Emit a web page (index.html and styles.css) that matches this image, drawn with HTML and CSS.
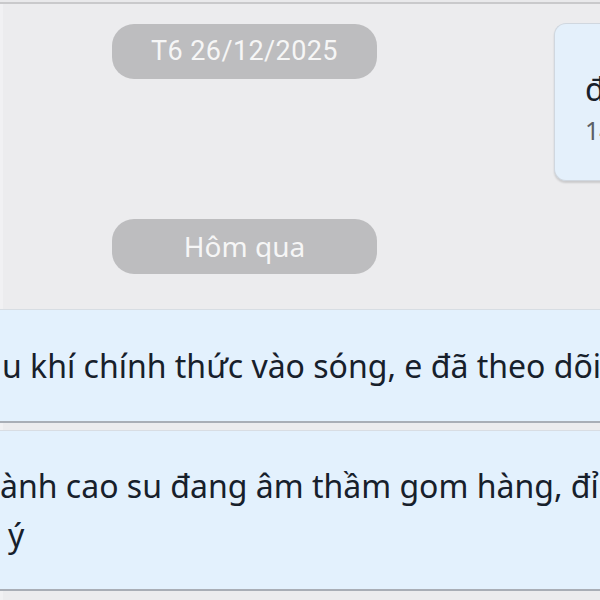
FILE: index.html
```html
<!DOCTYPE html>
<html lang="vi">
<head>
<meta charset="utf-8">
<title>Chat</title>
<link rel="stylesheet" href="styles.css">
</head>
<body>
<div class="screen">
  <div class="top">
    <div class="dates">
      <div class="pill pill-date">T6 26/12/2025</div>
      <div class="pill pill-day">Hôm qua</div>
    </div>
    <div class="peek">
      <div class="peek-text">đ</div>
      <div class="peek-time">14</div>
    </div>
  </div>
  <div class="msg m1">
    <p class="line">u khí chính thức vào sóng, e đã theo dõi</p>
  </div>
  <div class="msg m2">
    <p class="line">ành cao su đang âm thầm gom hàng, đỉnh</p>
    <p class="line indent">ý</p>
  </div>
</div>
</body>
</html>
```
FILE: styles.css
```css
html, body {
  margin: 0;
  padding: 0;
  width: 600px;
  height: 600px;
  overflow: hidden;
  background: #e9e9eb;
}
.screen {
  margin-top: 2px;
  border-top: 2px solid #c9c9cb;
  background: #ececee;
  height: 596px;
  overflow: hidden;
  box-shadow: inset 3px 0 0 #f1f1f3;
}
.top {
  display: flex;
  height: 306px;
}
.dates {
  width: 442px;
  flex: none;
  padding-left: 112px;
  display: flex;
  flex-direction: column;
}
.pill {
  width: 265px;
  height: 55px;
  border-radius: 22px;
  background: #bdbdbf;
  color: #f6f6f6;
  text-align: center;
  line-height: 55px;
  font-size: 27px;
}
.pill-date {
  margin-top: 20px;
  font-family: Roboto, "Liberation Sans", sans-serif;
  letter-spacing: 0.4px;
}
.pill-day {
  margin-top: 140px;
  font-family: "Noto Sans", "Open Sans", sans-serif;
  font-size: 28px;
}
.peek {
  margin-top: 19px;
  height: 158px;
  width: 80px;
  flex: none;
  box-sizing: border-box;
  background: #e4f0fb;
  border: 1px solid #d0d7df;
  border-right: none;
  border-radius: 12px 0 0 12px;
  box-shadow: 0 2px 2px rgba(0, 0, 0, 0.14);
  padding: 45px 0 0 30px;
  font-family: "Noto Sans", "Open Sans", sans-serif;
}
.peek-text {
  font-size: 32px;
  line-height: 40px;
  color: #18202a;
}
.peek-time {
  margin-top: 6px;
  font-size: 25px;
  line-height: 30px;
  color: #5b5f66;
}
.msg {
  margin: 0 -20px;
  padding: 31px 20px 0 22px;
  background: #e3f1fd;
  border-bottom: 2px solid #a9aeb6;
  box-sizing: border-box;
  font-family: "Noto Sans", "Open Sans", sans-serif;
  font-size: 32px;
  color: #17202b;
}
.m1 {
  height: 113px;
  box-shadow: 0 -1px 0 #d7dde3;
}
.m2 {
  margin-top: 7px;
  height: 161px;
  padding-left: 20px;
  border-top: 1px solid #d8dde3;
  padding-top: 30px;
}
.line {
  margin: 0;
  line-height: 49px;
  white-space: nowrap;
}
.indent {
  padding-left: 8px;
}
```
